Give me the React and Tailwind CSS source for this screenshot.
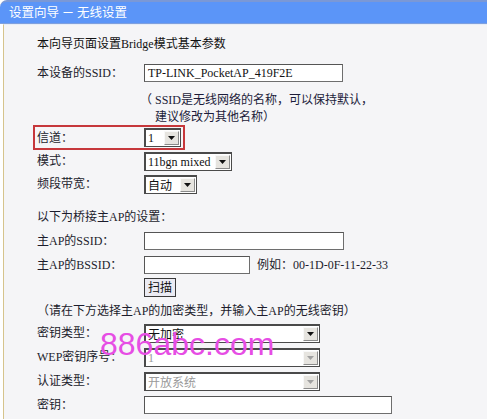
import React from "react";

const FONT = { fontFamily: '"Liberation Serif", "Noto Sans CJK SC", serif' };

function Arrow({ disabled }) {
  return (
    <div className="h-[14px] w-[15px] mr-[1px] flex items-center justify-center bg-[#e6e4df] border border-t-[#f8f8f8] border-l-[#f8f8f8] border-r-[#8a8a8a] border-b-[#8a8a8a]">
      <svg width="7" height="4" viewBox="0 0 7 4">
        <path d="M0 0 H7 L3.5 4 Z" fill={disabled ? "#a0a0a0" : "#111"} />
      </svg>
    </div>
  );
}

function Select({ cls, value, disabled, sans }) {
  return (
    <div
      className={`${cls} h-[19px] bg-white border border-[#4a4a4a] border-t-2 border-l-2 flex items-center justify-between`}
    >
      <span
        className={`pl-[2px] text-[12px] leading-none ${disabled ? "text-[#9a9a9a]" : "text-[#111]"}`}
        style={sans ? { fontFamily: '"Noto Sans CJK SC", sans-serif' } : undefined}
      >
        {value}
      </span>
      <Arrow disabled={disabled} />
    </div>
  );
}

function Input({ cls, value }) {
  return (
    <div className={`${cls} h-[18px] bg-white border border-[#6e6e6e] border-t-[#555] border-l-[#555] flex items-center pl-[3px] text-[12px] text-[#111]`}>
      {value}
    </div>
  );
}

function Row({ label, h = "h-[24px]", children }) {
  return (
    <div className={`${h} flex items-center`}>
      <div className="w-[107px] shrink-0 text-[12px] text-[#1c1c2c]">{label}</div>
      {children}
    </div>
  );
}

export default function App() {
  return (
    <div className="relative w-[487px] h-[419px] overflow-hidden bg-white flex flex-col" style={FONT}>
      <div className="h-[24px] shrink-0 bg-[#5b95f8] rounded-tl-[7px] border-t-2 border-[#7a98d6] border-b border-b-[#7fa0de] flex items-center pl-[9px] text-white text-[12.5px]" style={{ fontFamily: '"Noto Sans CJK SC", sans-serif' }}>
        设置向导 － 无线设置
      </div>
      <div className="flex-1 ml-[3px] border-l border-[#d6c48c] border-t border-t-[#e6edf8] bg-[#f5f5f7] pl-[33px] pt-[9px] text-[#1c1c2c]">
        <div className="h-[20px] flex items-center text-[12px] text-[#111]">本向导页面设置Bridge模式基本参数</div>

        <div className="mt-[7px]">
          <Row label="本设备的SSID：">
            <Input cls="w-[199px]" value="TP-LINK_PocketAP_419F2E" />
          </Row>
        </div>

        <div className="mt-[6px] text-[12px] text-[#1c1c3a]">
          <div className="h-[17px] flex items-center ml-[103px]">（ SSID是无线网络的名称，可以保持默认，</div>
          <div className="h-[17px] flex items-center ml-[118px]">建议修改为其他名称）</div>
        </div>

        <div className="-ml-[4px] w-[152px] h-[25px] border-2 border-[#c6373b] pl-[2px] flex items-center">
          <div className="w-[107px] shrink-0 text-[12px]">信道：</div>
          <Select cls="w-[37px]" value="1" />
        </div>

        <Row label="模式：" h="h-[22px]">
          <Select cls="w-[88px]" value="11bgn mixed" />
        </Row>
        <Row label="频段带宽：">
          <Select cls="w-[53px]" value="自动" sans />
        </Row>

        <div className="mt-[11px] h-[20px] flex items-center text-[12px]">以下为桥接主AP的设置：</div>

        <div className="mt-[2px]">
          <Row label="主AP的SSID：">
            <Input cls="w-[200px]" value="" />
          </Row>
          <Row label="主AP的BSSID：">
            <Input cls="w-[106px]" value="" />
            <span className="ml-[7px] text-[12px]">例如：00-1D-0F-11-22-33</span>
          </Row>
          <Row label="" h="h-[21px]">
            <div className="h-[19px] w-[32px] bg-[#ebebf3] border border-[#3a3a3a] flex items-center justify-center text-[12px] text-[#111]">扫描</div>
          </Row>
        </div>

        <div className="mt-[3px] h-[20px] flex items-center text-[12px]">（请在下方选择主AP的加密类型，并输入主AP的无线密钥）</div>

        <Row label="密钥类型：">
          <Select cls="w-[176px]" value="无加密" sans />
        </Row>
        <Row label="WEP密钥序号：">
          <Select cls="w-[176px]" value="1" disabled />
        </Row>
        <Row label="认证类型：">
          <Select cls="w-[176px]" value="开放系统" disabled sans />
        </Row>
        <Row label="密钥：">
          <Input cls="w-[248px]" value="" />
        </Row>
      </div>

      <div
        className="absolute left-[100px] top-[328px] text-[32px] leading-[32px] text-[#e64de4] pointer-events-none"
        style={{ fontFamily: '"Liberation Sans", Arial, sans-serif' }}
      >
        886abc.com
      </div>
    </div>
  );
}
